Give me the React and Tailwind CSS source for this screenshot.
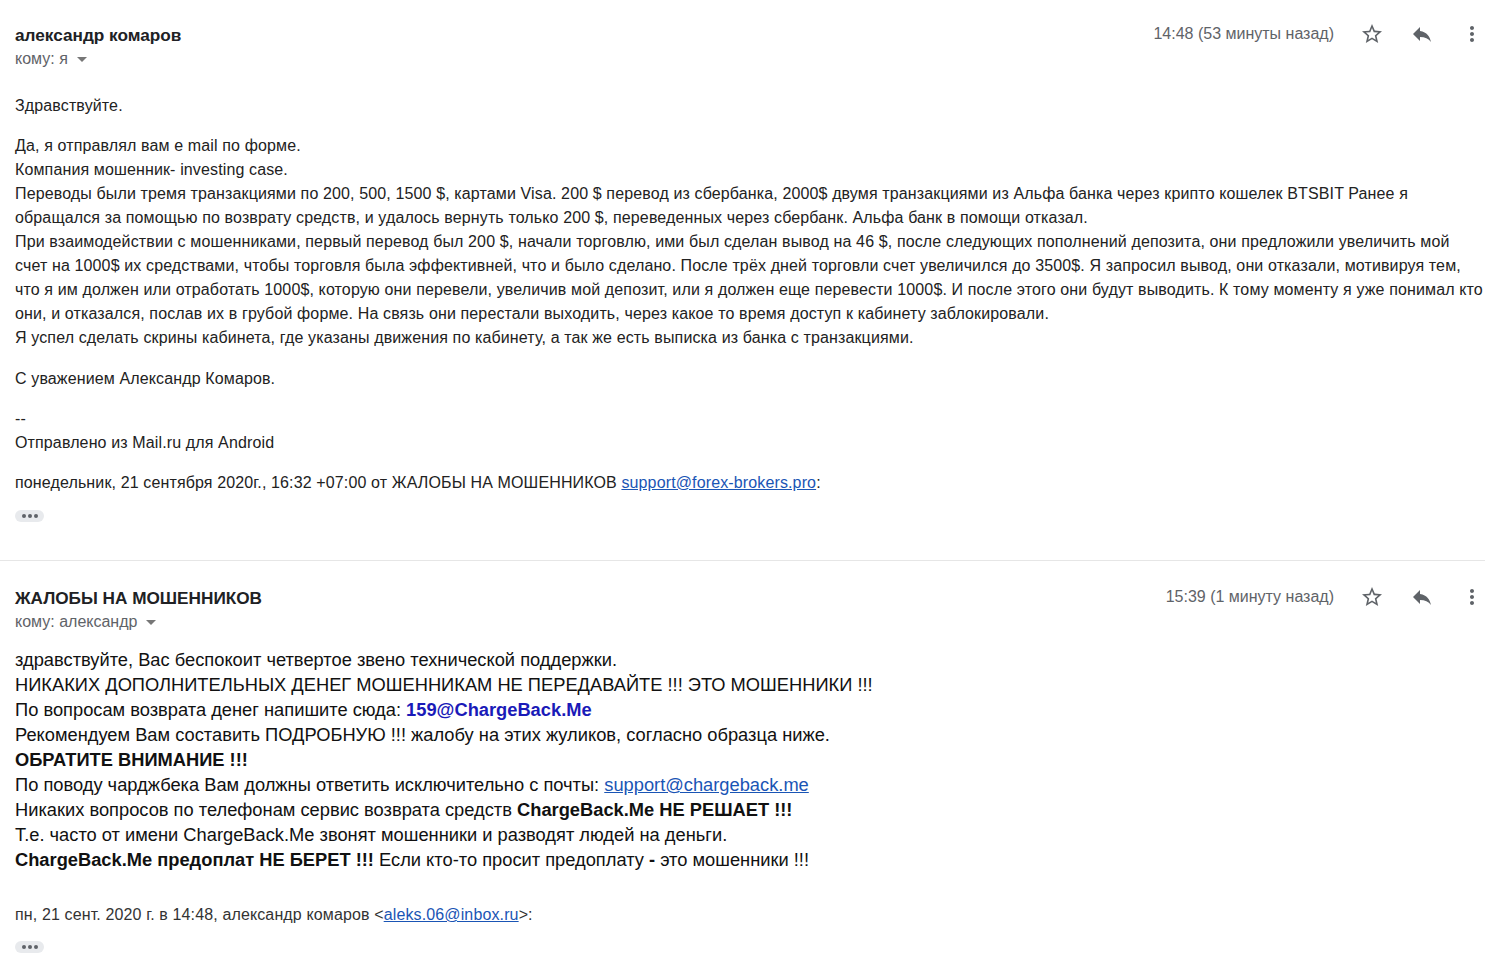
import React from "react";

const sans = { fontFamily: "'Liberation Sans', Arial, sans-serif" };

function StarIcon() {
  return (
    <svg width="24" height="24" viewBox="0 0 24 24" fill="#5f6368">
      <path d="M22 9.24l-7.19-.62L12 2 9.19 8.63 2 9.24l5.46 4.73L5.82 21 12 17.27 18.18 21l-1.63-7.03L22 9.24zM12 15.4l-3.76 2.27 1-4.28-3.32-2.88 4.38-.38L12 6.1l1.71 4.04 4.38.38-3.32 2.88 1 4.28L12 15.4z" />
    </svg>
  );
}

function ReplyIcon() {
  return (
    <svg width="24" height="24" viewBox="0 0 24 24" fill="#5f6368">
      <path d="M10 9V5l-7 7 7 7v-4.1c5 0 8.5 1.6 11 5.1-1-5-4-10-11-11z" />
    </svg>
  );
}

function MoreIcon() {
  return (
    <svg width="24" height="24" viewBox="0 0 24 24" fill="#5f6368">
      <path d="M12 8c1.1 0 2-.9 2-2s-.9-2-2-2-2 .9-2 2 .9 2 2 2zm0 2c-1.1 0-2 .9-2 2s.9 2 2 2 2-.9 2-2-.9-2-2-2zm0 6c-1.1 0-2 .9-2 2s.9 2 2 2 2-.9 2-2-.9-2-2-2z" />
    </svg>
  );
}

function Header({ name, to, time }) {
  return (
    <div className="flex items-start justify-between">
      <div className="pt-[25px]">
        <div className="text-[17.2px] font-bold leading-[20px] text-[#202124]" style={sans}>
          {name}
        </div>
        <div className="mt-[4px] flex items-center gap-[9px] text-[16px] leading-[20px] text-[#5f6368]" style={sans}>
          <span>кому: {to}</span>
          <svg width="10" height="5" viewBox="0 0 10 5" fill="#777">
            <path d="M0 0h10L5 5z" />
          </svg>
        </div>
      </div>
      <div className="flex items-center pt-[22px]">
        <span className="text-[16px] leading-[24px] text-[#5f6368]" style={sans}>
          {time}
        </span>
        <div className="ml-[26px] flex items-center gap-[26px]">
          <StarIcon />
          <ReplyIcon />
          <MoreIcon />
        </div>
      </div>
    </div>
  );
}

function Dots() {
  return (
    <div className="flex h-[12px] w-[29px] items-center justify-center gap-[2px] rounded-full bg-[#e8eaed]">
      <span className="h-[4px] w-[4px] rounded-full bg-[#5f6368]" />
      <span className="h-[4px] w-[4px] rounded-full bg-[#5f6368]" />
      <span className="h-[4px] w-[4px] rounded-full bg-[#5f6368]" />
    </div>
  );
}

const linkCls = "text-[#1a55b5] underline";

export default function App() {
  return (
    <div className="min-h-[954px] w-[1503px] bg-white">
      <div className="w-[1485px]">
        {/* first message */}
        <div className="pl-[15px] pr-[1px]">
          <Header name="александр комаров" to="я" time="14:48 (53 минуты назад)" />
          <div className="mt-[25px] text-[16px] leading-[24px] tracking-[0.13px] text-[#222]" style={sans}>
            <p>Здравствуйте.</p>
            <p className="mt-[16px]">
              Да, я отправлял вам е mail по форме.
              <br />
              Компания мошенник- investing case.
              <br />
              Переводы были тремя транзакциями по 200, 500, 1500 $, картами Visa. 200 $ перевод из сбербанка, 2000$ двумя транзакциями из Альфа банка через крипто кошелек BTSBIT Ранее я
              <br />
              обращался за помощью по возврату средств, и удалось вернуть только 200 $, переведенных через сбербанк. Альфа банк в помощи отказал.
              <br />
              При взаимодействии с мошенниками, первый перевод был 200 $, начали торговлю, ими был сделан вывод на 46 $, после следующих пополнений депозита, они предложили увеличить мой
              <br />
              счет на 1000$ их средствами, чтобы торговля была эффективней, что и было сделано. После трёх дней торговли счет увеличился до 3500$. Я запросил вывод, они отказали, мотивируя тем,
              <br />
              что я им должен или отработать 1000$, которую они перевели, увеличив мой депозит, или я должен еще перевести 1000$. И после этого они будут выводить. К тому моменту я уже понимал кто
              <br />
              они, и отказался, послав их в грубой форме. На связь они перестали выходить, через какое то время доступ к кабинету заблокировали.
              <br />
              Я успел сделать скрины кабинета, где указаны движения по кабинету, а так же есть выписка из банка с транзакциями.
            </p>
            <p className="mt-[17px]">С уважением Александр Комаров.</p>
            <p className="mt-[16px]">
              --
              <br />
              Отправлено из Mail.ru для Android
            </p>
            <p className="mt-[16px]">
              понедельник, 21 сентября 2020г., 16:32 +07:00 от ЖАЛОБЫ НА МОШЕННИКОВ <span className={linkCls}>support@forex-brokers.pro</span>:
            </p>
          </div>
          <div className="mt-[15px]">
            <Dots />
          </div>
        </div>

        <div className="mt-[38px] h-px bg-[#e6e6e6]" />

        {/* second message */}
        <div className="pl-[15px] pr-[1px]">
          <div className="mt-[2px]">
            <Header name="ЖАЛОБЫ НА МОШЕННИКОВ" to="александр" time="15:39 (1 минуту назад)" />
          </div>
          <div className="mt-[15px] text-[18.3px] leading-[25px] text-[#111]" style={sans}>
            <p>здравствуйте, Вас беспокоит четвертое звено технической поддержки.</p>
            <p>НИКАКИХ ДОПОЛНИТЕЛЬНЫХ ДЕНЕГ МОШЕННИКАМ НЕ ПЕРЕДАВАЙТЕ !!! ЭТО МОШЕННИКИ !!!</p>
            <p>
              По вопросам возврата денег напишите сюда: <span className="font-bold text-[#1a1ab8]">159@ChargeBack.Me</span>
            </p>
            <p>Рекомендуем Вам составить ПОДРОБНУЮ !!! жалобу на этих жуликов, согласно образца ниже.</p>
            <p className="font-bold">ОБРАТИТЕ ВНИМАНИЕ !!!</p>
            <p>
              По поводу чарджбека Вам должны ответить исключительно с почты: <span className={linkCls}>support@chargeback.me</span>
            </p>
            <p>
              Никаких вопросов по телефонам сервис возврата средств <b>ChargeBack.Me НЕ РЕШАЕТ !!!</b>
            </p>
            <p>Т.е. часто от имени ChargeBack.Me звонят мошенники и разводят людей на деньги.</p>
            <p>
              <b>ChargeBack.Me предоплат НЕ БЕРЕТ !!!</b> Если кто-то просит предоплату <b>-</b> это мошенники !!!
            </p>
          </div>
          <p className="mt-[33px] text-[16px] leading-[20px] tracking-[0.13px] text-[#333]" style={sans}>
            пн, 21 сент. 2020 г. в 14:48, александр комаров &lt;<span className={linkCls}>aleks.06@inbox.ru</span>&gt;:
          </p>
          <div className="mt-[16px]">
            <Dots />
          </div>
        </div>
      </div>
    </div>
  );
}
